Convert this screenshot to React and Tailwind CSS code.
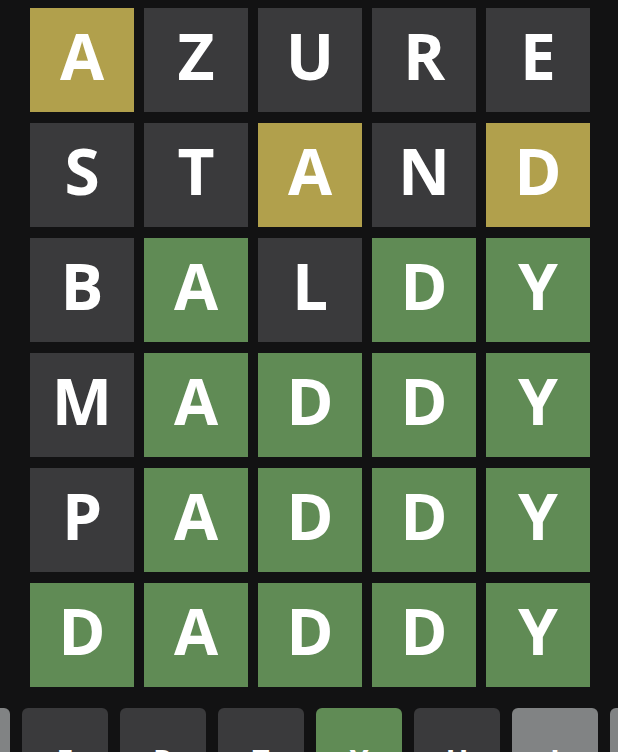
import React from "react";

const Y = "bg-[#b1a04c]";
const G = "bg-[#608b55]";
const D = "bg-[#3a3a3c]";

const rows = [
  [["A", Y], ["Z", D], ["U", D], ["R", D], ["E", D]],
  [["S", D], ["T", D], ["A", Y], ["N", D], ["D", Y]],
  [["B", D], ["A", G], ["L", D], ["D", G], ["Y", G]],
  [["M", D], ["A", G], ["D", G], ["D", G], ["Y", G]],
  [["P", D], ["A", G], ["D", G], ["D", G], ["Y", G]],
  [["D", G], ["A", G], ["D", G], ["D", G], ["Y", G]],
];

const keys = [
  ["Q", "bg-[#818384]"],
  ["W", "bg-[#818384]"],
  ["E", D],
  ["R", D],
  ["T", D],
  ["Y", G],
  ["U", D],
  ["I", "bg-[#818384]"],
  ["O", "bg-[#818384]"],
  ["P", D],
];

export default function App() {
  return (
    <div
      className="w-[618px] h-[752px] bg-[#121213] overflow-hidden flex flex-col"
      style={{ fontFamily: '"Open Sans", "Liberation Sans", sans-serif' }}
    >
      <div className="pt-[8px] pl-[30px] grid grid-cols-[repeat(5,104px)] gap-x-[10px] gap-y-[11px]">
        {rows.flat().map(([l, c], i) => (
          <div
            key={i}
            className={`${c} h-[104px] pb-[8px] flex items-center justify-center text-white font-bold text-[64px] leading-none`}
          >
            {l}
          </div>
        ))}
      </div>
      <div className="mt-[21px] flex gap-[12px] ml-[-174px]">
        {keys.map(([l, c], i) => (
          <div
            key={i}
            className={`${c} shrink-0 w-[86px] h-[116px] rounded-[6px] flex items-start justify-center pt-[38px] text-white font-bold text-[30px] leading-none`}
          >
            {l}
          </div>
        ))}
      </div>
    </div>
  );
}
